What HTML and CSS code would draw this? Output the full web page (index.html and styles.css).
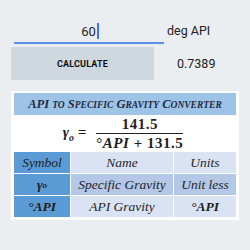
FILE: index.html
```html
<!DOCTYPE html>
<html lang="en">
<head>
    <meta charset="UTF-8">
    <title>API Gravity</title>
    <link rel="stylesheet" href="styles.css">
</head>
<body>
    <div class="form-row">
        <div class="input-box">
            <span class="input-value">60</span><span class="caret"></span>
        </div>
        <span class="unit">deg API</span>
    </div>
    <div class="form-row">
        <button class="calc-btn">CALCULATE</button>
        <span class="result">0.7389</span>
    </div>

    <div class="sheet">
        <div class="sheet-title">API <span class="sc">to</span> S<span class="sc">pecific</span> G<span class="sc">ravity</span> C<span class="sc">onverter</span></div>
        <div class="formula">
            <span class="lhs">&gamma;<sub>o</sub> =</span>
            <span class="frac">
                <span class="num">141.5</span>
                <span class="den">&deg;<i>API</i> + 131.5</span>
            </span>
        </div>
        <div class="grid">
            <div class="cell sym">Symbol</div>
            <div class="cell head">Name</div>
            <div class="cell head">Units</div>
            <div class="cell sym bold">&gamma;<sub>o</sub></div>
            <div class="cell mid">Specific Gravity</div>
            <div class="cell mid">Unit less</div>
            <div class="cell sym bold">&deg;API</div>
            <div class="cell light">API Gravity</div>
            <div class="cell light bold">&deg;API</div>
        </div>
    </div>
</body>
</html>
```

FILE: styles.css
```css
body {
    margin: 0;
    padding: 0;
    width: 250px;
    height: 250px;
    background: #ebeef1;
    font-family: Roboto, sans-serif;
    color: #222;
    overflow: hidden;
}
.form-row {
    display: flex;
    align-items: center;
}
.form-row:first-child {
    padding: 21px 0 0 14px;
    height: 22px;
}
.input-box {
    width: 148px;
    height: 21px;
    border-bottom: 2px solid #5b8fe8;
    display: flex;
    justify-content: center;
    align-items: center;
    font-size: 13px;
    padding-left: 2px;
}
.caret {
    width: 2px;
    height: 16px;
    background: #3b78e7;
    margin-left: 1px;
}
.unit {
    margin-left: 3px;
    font-size: 12.5px;
    padding-bottom: 4px;
}
.form-row:nth-child(2) {
    padding: 4px 0 0 11px;
}
.calc-btn {
    width: 143px;
    height: 33px;
    border: none;
    background: #d0d8df;
    font-family: Roboto, sans-serif;
    font-weight: bold;
    font-size: 9px;
    letter-spacing: 0.2px;
    color: #111;
    padding: 0;
}
.result {
    margin-left: 23px;
    font-size: 12.5px;
}
.sheet {
    margin: 11px 0 0 11px;
    width: 222px;
    padding: 2px 3px 3px 3px;
    background: #fff;
    font-family: "Liberation Serif", serif;
    font-style: italic;
    color: #1f1f1f;
}
.sheet-title {
    background: #9dc3e6;
    height: 22px;
    line-height: 22px;
    text-align: center;
    font-weight: bold;
    font-size: 12.5px;
    color: #1f2a44;
}
.sc {
    font-size: 9.5px;
    text-transform: uppercase;
}
.formula {
    height: 37px;
    display: flex;
    align-items: center;
    justify-content: center;
    font-weight: bold;
    font-size: 15px;
    font-style: normal;
    padding-right: 4px;
}
.lhs {
    font-style: italic;
    margin-right: 10px;
}
.lhs sub {
    font-size: 10px;
}
.cell sub {
    font-size: 9px;
}
.frac {
    display: flex;
    flex-direction: column;
    align-items: center;
}
.num {
    border-bottom: 1px solid #222;
    align-self: stretch;
    text-align: center;
    line-height: 17px;
    letter-spacing: 0.5px;
}
.den {
    line-height: 18px;
    letter-spacing: 0.5px;
}
.grid {
    display: grid;
    grid-template-columns: 56px 103px 63px;
    grid-auto-rows: 21px;
    row-gap: 1px;
}
.cell {
    display: flex;
    align-items: center;
    justify-content: center;
    font-size: 13.5px;
}
.sym {
    background: #5b9bd5;
}
.head {
    background: #dae3f3;
    border-left: 1px solid #fff;
}
.mid {
    background: #b4c7e7;
    border-left: 1px solid #fff;
}
.light {
    background: #dae3f3;
    border-left: 1px solid #fff;
}
.bold {
    font-weight: bold;
}
```
